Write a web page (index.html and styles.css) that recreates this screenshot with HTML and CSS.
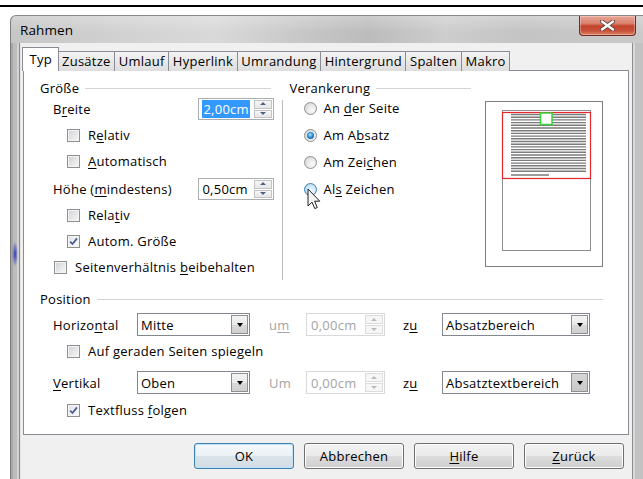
FILE: index.html
```html
<!DOCTYPE html>
<html lang="de">
<head>
<meta charset="utf-8">
<title>Rahmen</title>
<link rel="stylesheet" href="styles.css">
</head>
<body>
<div class="desk-rule"></div>
<div class="window">
  <div class="titlebar">
    <span class="title">Rahmen</span>
    <div class="close" aria-label="Schließen">
      <svg width="15" height="11" viewBox="0 0 15 11"><path d="M2 1.5 L13 9.5 M13 1.5 L2 9.5" stroke="#5a3a34" stroke-width="4" stroke-linecap="round"/><path d="M2 1.5 L13 9.5 M13 1.5 L2 9.5" stroke="#fff" stroke-width="2.4" stroke-linecap="round"/></svg>
    </div>
  </div>
  <div class="client">
    <div class="tabs">
      <div class="tab active">Typ</div>
      <div class="tab">Zusätze</div>
      <div class="tab">Umlauf</div>
      <div class="tab">Hyperlink</div>
      <div class="tab">Umrandung</div>
      <div class="tab">Hintergrund</div>
      <div class="tab">Spalten</div>
      <div class="tab">Makro</div>
    </div>
    <div class="panel">
      <div class="upper">
        <div class="col size">
          <div class="group-head">Größe</div>
          <div class="row field">
            <span class="lbl">B<u>r</u>eite</span>
            <div class="spin">
              <span class="val"><span class="sel">2,00cm</span></span>
              <span class="spinbtn"><i class="up"></i><i class="dn"></i></span>
            </div>
          </div>
          <div class="row check"><span class="cb"></span><span>R<u>e</u>lativ</span></div>
          <div class="row check"><span class="cb"></span><span><u>A</u>utomatisch</span></div>
          <div class="row field tall">
            <span class="lbl">Höhe (<u>m</u>indestens)</span>
            <div class="spin">
              <span class="val">0,50cm</span>
              <span class="spinbtn"><i class="up"></i><i class="dn"></i></span>
            </div>
          </div>
          <div class="row check"><span class="cb"></span><span>Rela<u>t</u>iv</span></div>
          <div class="row check"><span class="cb on"><svg width="11" height="11" viewBox="0 0 11 11"><path d="M2.2 5.6 L4.5 8 L9 2.4" fill="none" stroke="#4a5f97" stroke-width="1.8"/></svg></span><span>Autom. Größe</span></div>
          <div class="row check outer"><span class="cb"></span><span>Seitenverhältnis <u>b</u>eibehalten</span></div>
        </div>
        <div class="vsep"></div>
        <div class="col anchor">
          <div class="group-head">Verankerung</div>
          <div class="row radio"><span class="rb"></span><span>An <u>d</u>er Seite</span></div>
          <div class="row radio"><span class="rb on"></span><span>Am A<u>b</u>satz</span></div>
          <div class="row radio"><span class="rb"></span><span>Am Zei<u>c</u>hen</span></div>
          <div class="row radio"><span class="rb hover"><svg class="cursor" width="14" height="22" viewBox="0 0 14 22"><path d="M1 1 V18 L5 14.2 L7.8 20.6 L10.3 19.5 L7.6 13.2 H12.8 Z" fill="#f4f4f4" stroke="#222" stroke-width="1" stroke-linejoin="miter"/></svg></span><span>Al<u>s</u> Zeichen</span></div>
        </div>
        <div class="preview">
          <svg width="116" height="164" viewBox="0 0 116 164">
            <rect x="16.5" y="8.5" width="88" height="140" fill="#fff" stroke="#8d8d8d"/>
            <g stroke="#7b7b7b" stroke-width="1.4">
              <path d="M25 12.5H100M25 15.2H100M25 17.9H100M25 20.6H100M25 23.3H100M25 26H100M25 28.7H100M25 31.4H100M25 34.1H100M25 36.8H100M25 39.5H100M25 42.2H100M25 44.9H100M25 47.6H100M25 50.3H100M25 53H100M25 55.7H100M25 58.4H100M25 61.1H100M25 63.8H100M25 66.5H100M25 69.2H100M25 73H63"/>
            </g>
            <rect x="16.5" y="10.5" width="88" height="66" fill="none" stroke="#e5262b" stroke-width="1.2"/>
            <rect x="54.5" y="11" width="11.5" height="11.5" fill="#fff" stroke="#39d639" stroke-width="1.5"/>
          </svg>
        </div>
      </div>
      <div class="position">
        <div class="group-head">Position</div>
        <div class="prow">
          <span>Horizo<u>n</u>tal</span>
          <div class="combo"><span class="cval">Mitte</span><span class="cbtn"><i></i></span></div>
          <span class="dim pad">u<u>m</u></span>
          <div class="spin off">
            <span class="val">0,00cm</span>
            <span class="spinbtn"><i class="up"></i><i class="dn"></i></span>
          </div>
          <span class="pad">z<u>u</u></span>
          <div class="combo"><span class="cval">Absatzbereich</span><span class="cbtn"><i></i></span></div>
        </div>
        <div class="row check pcheck"><span class="cb"></span><span>Auf geraden Seiten spie<u>g</u>eln</span></div>
        <div class="prow second">
          <span><u>V</u>ertikal</span>
          <div class="combo"><span class="cval">Oben</span><span class="cbtn"><i></i></span></div>
          <span class="dim pad">Um</span>
          <div class="spin off">
            <span class="val">0,00cm</span>
            <span class="spinbtn"><i class="up"></i><i class="dn"></i></span>
          </div>
          <span class="pad">z<u>u</u></span>
          <div class="combo"><span class="cval">Absatztextbereich</span><span class="cbtn pressed"><i></i></span></div>
        </div>
        <div class="row check pcheck last"><span class="cb on"><svg width="11" height="11" viewBox="0 0 11 11"><path d="M2.2 5.6 L4.5 8 L9 2.4" fill="none" stroke="#4a5f97" stroke-width="1.8"/></svg></span><span>Textfluss <u>f</u>olgen</span></div>
      </div>
    </div>
    <div class="buttons">
      <button class="btn default">OK</button>
      <button class="btn">Abbrechen</button>
      <button class="btn"><u>H</u>ilfe</button>
      <button class="btn"><u>Z</u>urück</button>
    </div>
  </div>
</div>
</body>
</html>
```

FILE: styles.css
```css
* { box-sizing: border-box; }

html, body {
  margin: 0;
  height: 100%;
  overflow: hidden;
  background: #fff;
}

body {
  font-family: "Open Sans", "Noto Sans", sans-serif;
  font-size: 13px;
  letter-spacing: 0.25px;
  color: #000;
}

u { text-underline-offset: 2px; text-decoration-thickness: 1px; }

.desk-rule {
  height: 2px;
  margin-top: 5px;
  background: #000;
}

/* window frame */
.window {
  margin: 8px 0 0 10px;
  width: 640px;
  height: 470px;
  border-radius: 6px 6px 0 0;
  border-top: 1px solid #8a8a8a;
  border-left: 1px solid #7c7c7c;
  background:
    radial-gradient(3px 13px at 4px 238px, #2f3bb8 0, rgba(47, 59, 184, 0) 100%),
    linear-gradient(to right, #a6a6a6 0 2px, #bdbdbd 2px 6px, #d3d3d3 6px 8px, #8c8c8c 8px 9px, #e4e4e4 9px 10px, #c4c4c4 10px 621px, #8c8c8c 621px 622px, #d8d8d8 622px 624px, #c2c2c2 624px);
  display: flex;
  flex-direction: column;
  overflow: hidden;
}

.titlebar {
  height: 27px;
  display: flex;
  align-items: flex-start;
  background:
    linear-gradient(to bottom, rgba(255, 255, 255, 0.25), rgba(255, 255, 255, 0) 60%),
    linear-gradient(to right, #c6c6c6 0%, #d2d2d2 18%, #d9d9d9 32%, #c4c4c4 48%, #bcbcbc 56%, #cdcdcd 68%, #c4c4c4 80%, #cacaca 100%);
  border-radius: 5px 5px 0 0;
}

.title {
  padding-left: 9px;
  line-height: 29px;
  font-size: 13.5px;
  letter-spacing: 0.1px;
}

.close {
  margin-left: auto;
  margin-right: 14px;
  width: 57px;
  height: 20px;
  border: 1px solid #6f2c20;
  border-top: none;
  border-radius: 0 0 4px 4px;
  background: linear-gradient(to bottom, #e7a696 0%, #d9806c 40%, #c4452d 52%, #c9513a 78%, #dc8466 100%);
  box-shadow: inset 0 0 0 1px rgba(255, 255, 255, 0.3);
  display: flex;
  align-items: center;
  justify-content: center;
}

/* dialog client area */
.client {
  margin-left: 10px;
  width: 611px;
  flex: 1;
  background: #f0f0f0;
  padding: 4px 0 0 2px;
}

.tabs {
  display: flex;
  align-items: flex-end;
  height: 24px;
  margin-bottom: -1px;
  position: relative;
  z-index: 1;
}

.tab {
  height: 20px;
  padding: 0 3.6px;
  line-height: 19px;
  border: 1px solid #898c95;
  border-bottom: none;
  margin-right: -1px;
  background: linear-gradient(to bottom, #f3f3f3, #e8e8e8 50%, #dedede);
}

.tab.active {
  height: 24px;
  line-height: 23px;
  margin: 0 -2px 0 -1px;
  padding: 0 6.5px;
  background: #fff;
  position: relative;
  z-index: 2;
}

.panel {
  width: 606px;
  height: 365px;
  border: 1px solid #898c95;
  background: #fff;
  padding: 9px 25px 0 16px;
}

.upper {
  display: flex;
  align-items: flex-start;
  height: 211px;
}

.col { display: flex; flex-direction: column; }

.size { width: 235px; gap: 4px; }
.anchor { width: 182px; margin-left: 6px; gap: 5px; }

.group-head {
  display: flex;
  align-items: center;
  height: 16px;
  line-height: 16px;
}

.group-head::after {
  content: "";
  flex: 1;
  height: 1px;
  margin-left: 6px;
  background: #d3d3d3;
}

.size .group-head { margin-right: 3px; margin-bottom: -2px; }
.anchor .group-head { margin-bottom: -4px; }

.vsep {
  width: 1px;
  height: 180px;
  margin: 20px 0 0 8px;
  background: #bdbdbd;
}

.row {
  display: flex;
  align-items: center;
  height: 22px;
}

.row.field { padding-left: 13px; }
.row.field.tall { margin-top: 2px; }
.row.check { padding-left: 27px; }
.row.check.outer { padding-left: 14px; }
.row.radio { padding-left: 15px; }

/* spin field */
.spin {
  margin-left: auto;
  width: 76px;
  height: 22px;
  border: 1px solid #abadb3;
  background: #fff;
  display: flex;
  align-items: center;
  padding: 1px 1px 1px 2px;
}

.spin .val { flex: 1; padding-left: 1px; line-height: 16px; }

.spin .sel {
  background: #3399ff;
  color: #fff;
  padding: 0 1px;
}

.spinbtn {
  width: 18px;
  height: 100%;
  display: flex;
  flex-direction: column;
  gap: 1px;
}

.spinbtn i {
  flex: 1;
  border: 1px solid #c3c3c3;
  background: linear-gradient(to bottom, #f6f6f6, #e6e6e6);
  position: relative;
}

.spinbtn i::after {
  content: "";
  position: absolute;
  left: 50%;
  top: 50%;
  margin: -2px 0 0 -3px;
  border-left: 3px solid transparent;
  border-right: 3px solid transparent;
}

.spinbtn .up::after { border-bottom: 3px solid #4d6185; }
.spinbtn .dn::after { border-top: 3px solid #4d6185; }

.spin.off { margin-left: 0; width: 79px; height: 23px; border-color: #d9d9d9; color: #a3a3a3; }
.spin.off .val { padding-left: 2px; }
.spin.off .spinbtn i { border-color: #dcdcdc; background: #f6f6f6; }
.spin.off .spinbtn .up::after { border-bottom-color: #b9b9b9; }
.spin.off .spinbtn .dn::after { border-top-color: #b9b9b9; }

/* check boxes */
.cb {
  width: 13px;
  height: 13px;
  flex: none;
  margin-right: 8px;
  border: 1px solid #8f8f8f;
  background: linear-gradient(135deg, #ccd0d5 0%, #e6e7e9 55%, #f7f7f7 100%);
  box-shadow: inset 0 0 0 1px #f4f4f4;
  display: flex;
  align-items: center;
  justify-content: center;
}

.cb.on { background: linear-gradient(135deg, #dfe2e6 0%, #f1f2f3 60%, #fafafa 100%); }

/* radio buttons */
.rb {
  width: 13px;
  height: 13px;
  flex: none;
  margin-right: 6px;
  border-radius: 50%;
  border: 1px solid #8e8f8f;
  background: radial-gradient(circle at 65% 65%, #fafafa 0%, #e4e4e4 55%, #c9cbce 100%);
  position: relative;
}

.rb.on::after {
  content: "";
  position: absolute;
  left: 2px;
  top: 2px;
  width: 7px;
  height: 7px;
  border-radius: 50%;
  background: radial-gradient(circle at 45% 40%, #b4e6fd 0%, #2a8fd2 45%, #0d3f6c 100%);
}

.rb.hover {
  border-color: #3c7fb1;
  background: radial-gradient(circle at 60% 60%, #f0f9fe 0%, #c6e6f8 55%, #8fc6ea 100%);
}

.cursor {
  position: absolute;
  left: 2px;
  top: 4px;
}

/* page preview */
.preview {
  width: 118px;
  height: 166px;
  margin: 21px 0 0 14px;
  border: 1px solid #7d7d7d;
  background: #fff;
}

.preview svg { display: block; }

/* position group */
.position .group-head { height: 16px; }

.prow {
  display: grid;
  grid-template-columns: 84px 113px 56px 79px 57px 148px;
  align-items: center;
  height: 23px;
  margin-top: 6px;
  padding-left: 13px;
}

.prow.second { margin-top: 9px; }

.pad { padding-left: 19px; }
.prow .pad:nth-child(5) { padding-left: 18px; }
.dim { color: #a3a3a3; }

.row.pcheck { margin-top: 4px; }
.row.pcheck.last { margin-top: 5px; }

.combo {
  height: 23px;
  border: 1px solid #828790;
  background: #fff;
  display: flex;
  align-items: center;
  padding: 1px;
}

.cval { flex: 1; padding-left: 2px; }

.cbtn {
  width: 17px;
  height: 19px;
  border: 1px solid #8e8f8f;
  background: linear-gradient(to bottom, #f4f4f4, #e9e9e9 50%, #d9d9d9 51%, #d0d0d0);
  display: flex;
  align-items: center;
  justify-content: center;
}

.cbtn.pressed { background: linear-gradient(to bottom, #d6d6d6, #c8c8c8); }

.cbtn i {
  display: block;
  width: 0;
  height: 0;
  border-left: 3.5px solid transparent;
  border-right: 3.5px solid transparent;
  border-top: 4px solid #000;
  margin-top: 1px;
}

/* dialog buttons */
.buttons {
  display: flex;
  justify-content: flex-end;
  gap: 10px;
  margin-top: 8px;
  padding-right: 8px;
}

.btn {
  width: 100px;
  height: 26px;
  border: 1px solid #707070;
  border-radius: 3px;
  background: linear-gradient(to bottom, #f2f2f2 0%, #ebebeb 49%, #dddddd 50%, #cfcfcf 100%);
  box-shadow: inset 0 0 0 1px #fcfcfc;
  font: inherit;
  letter-spacing: inherit;
  color: #000;
  padding: 0;
}

.btn.default {
  border-color: #3c7fb1;
  background: linear-gradient(to bottom, #f4f8fb 0%, #ebf1f6 49%, #dce4eb 50%, #d2dbe3 100%);
  box-shadow: inset 0 0 0 1px #bfe3f8;
}
```
